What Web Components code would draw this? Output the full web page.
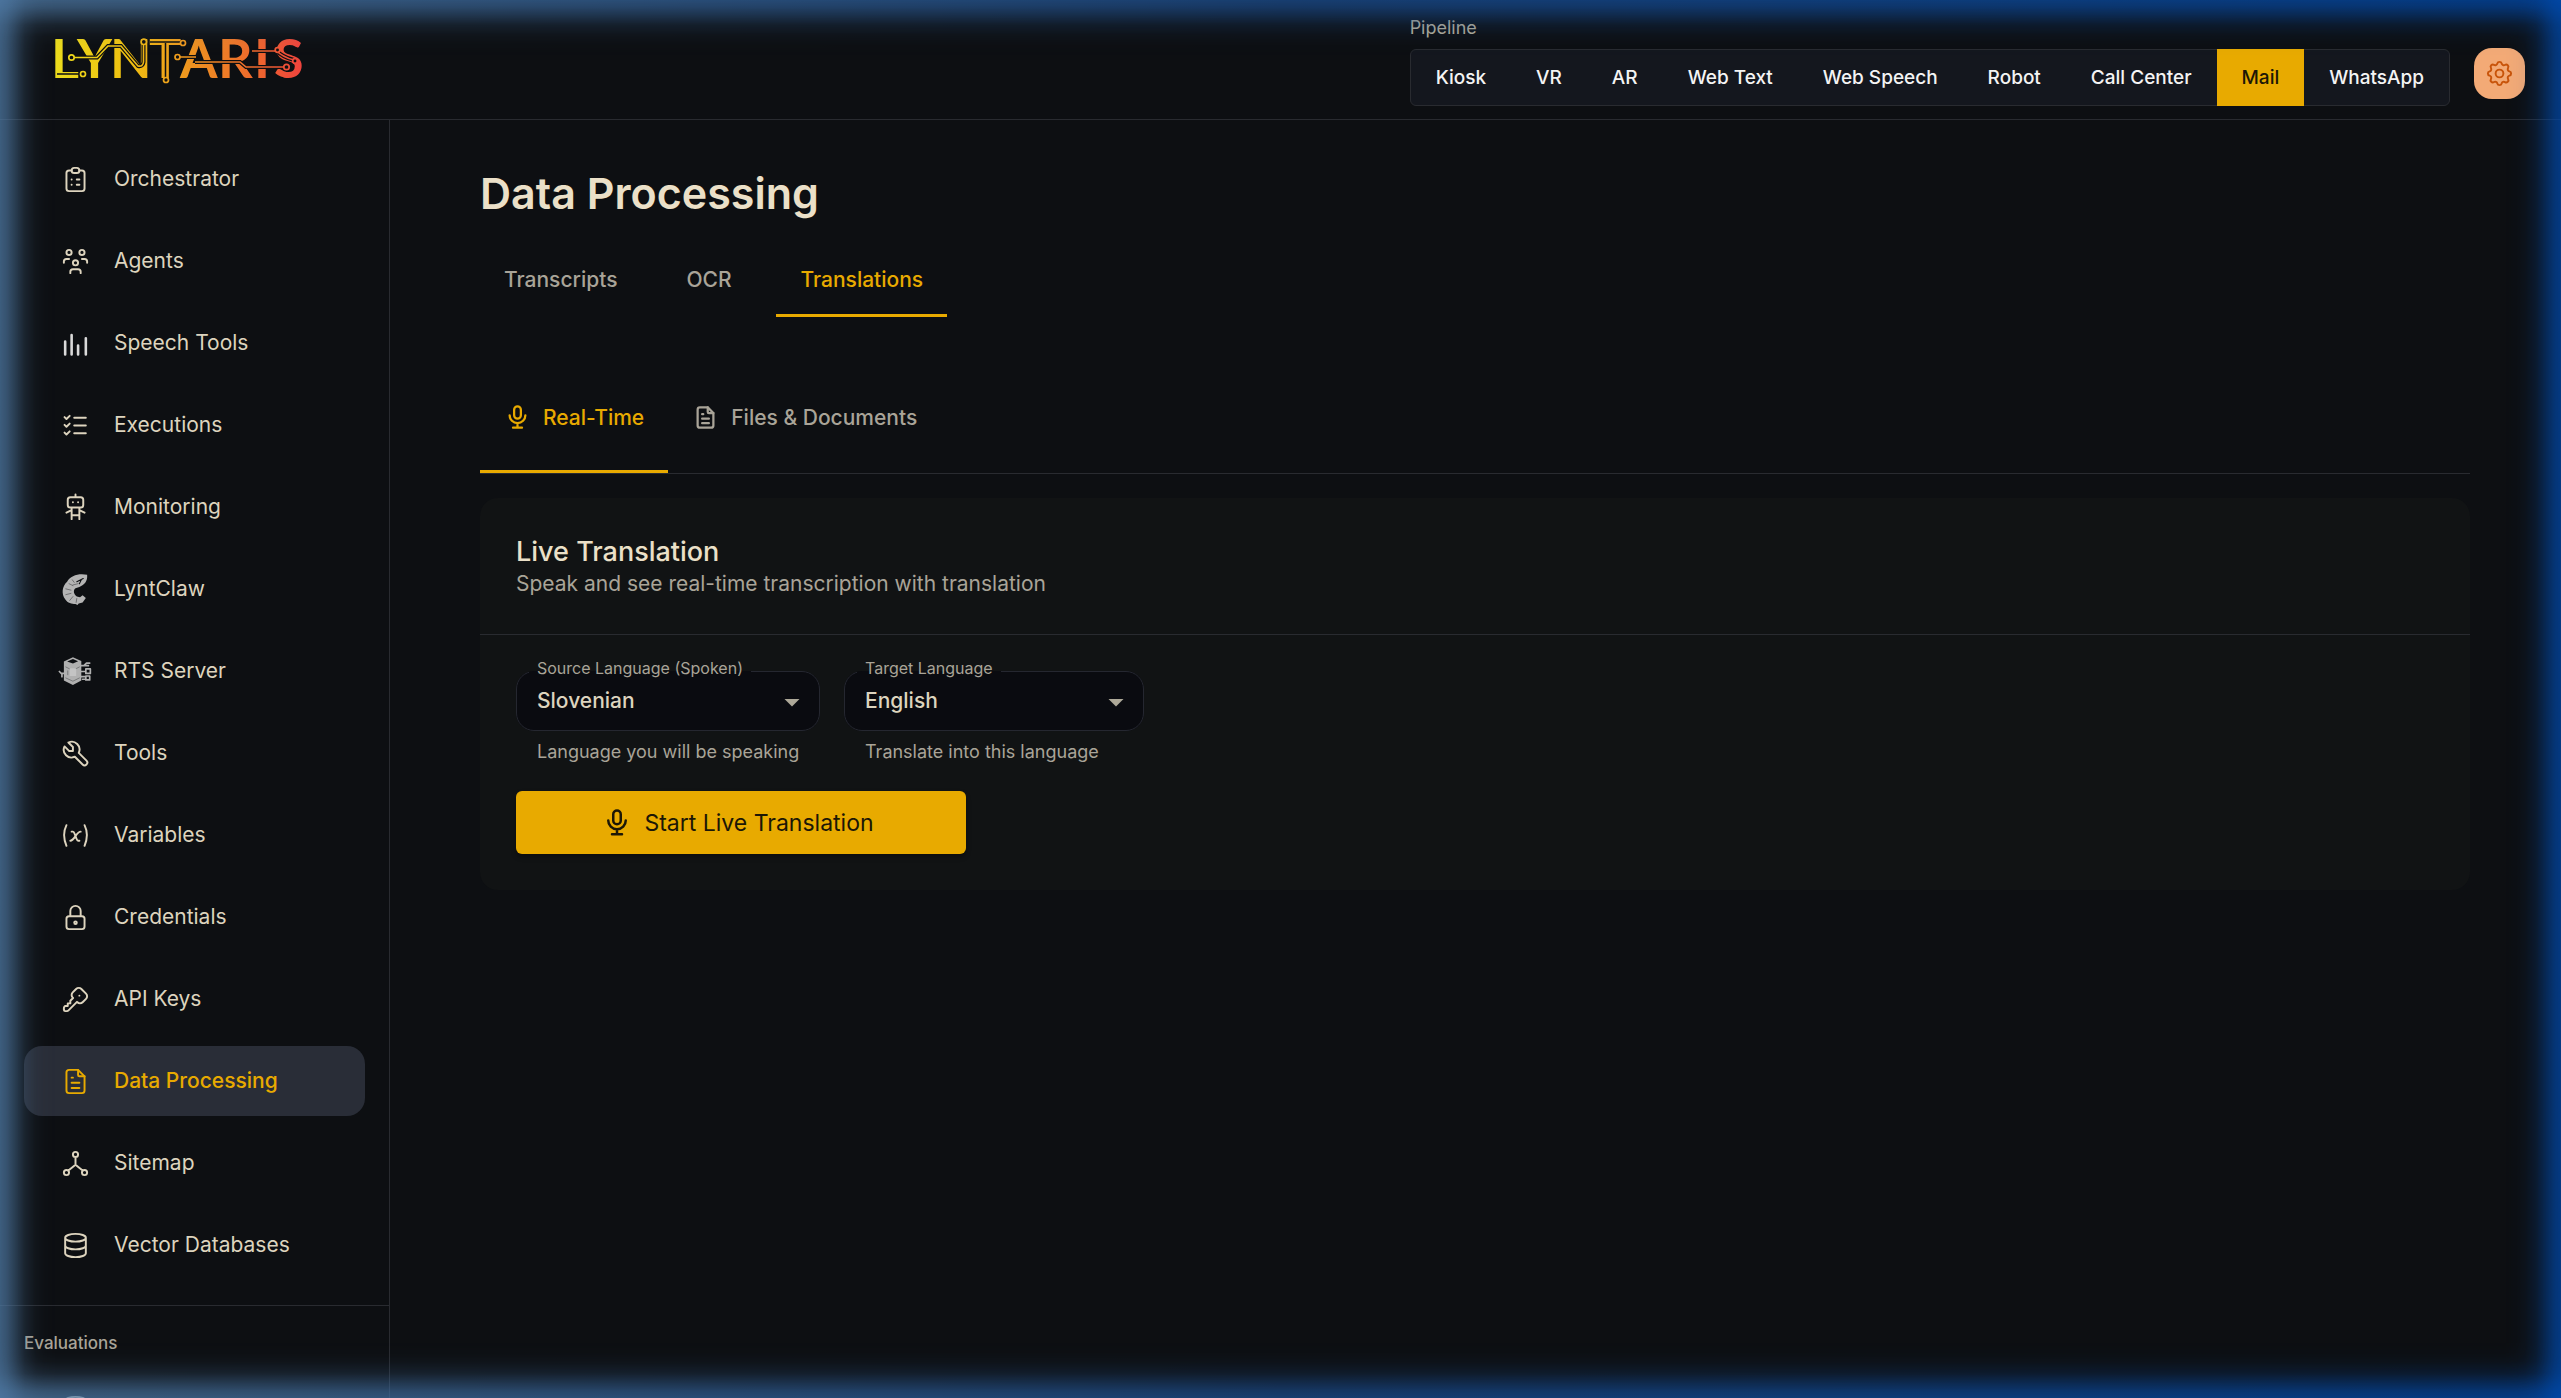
<!DOCTYPE html>
<html lang="en">
<head>
<meta charset="utf-8">
<title>Data Processing - Lyntaris</title>
<style>
  :root {
    --color-bg: #0d0f12;
    --color-surface: #111314;
    --color-field: #0a0b10;
    --color-border: #292b30;
    --color-active: #292d37;
    --color-primary: #e8aa00;
    --color-heading: #ebe0c8;
    --color-text: #ddd4be;
    --color-muted: #a9a498;
    --font-family: Inter, "Liberation Sans", sans-serif;
  }

  html, body { height: 100%; }

  body {
    margin: 0;
    overflow: hidden;
    background: var(--color-bg);
    color: var(--color-text);
    font-family: var(--font-family);
    font-size: 21px;
    line-height: 30px;
  }
</style>
</head>
<body>
<app-shell>
  <app-header slot="header">
    <pipeline-switch label="Pipeline" value="Mail" options="Kiosk,VR,AR,Web Text,Web Speech,Robot,Call Center,Mail,WhatsApp"></pipeline-switch>
  </app-header>

  <side-nav slot="sidebar">
    <nav-item icon="clipboard">Orchestrator</nav-item>
    <nav-item icon="users">Agents</nav-item>
    <nav-item icon="bars">Speech Tools</nav-item>
    <nav-item icon="checks">Executions</nav-item>
    <nav-item icon="robot">Monitoring</nav-item>
    <nav-item icon="claw">LyntClaw</nav-item>
    <nav-item icon="server">RTS Server</nav-item>
    <nav-item icon="tool">Tools</nav-item>
    <nav-item icon="variable">Variables</nav-item>
    <nav-item icon="lock">Credentials</nav-item>
    <nav-item icon="key">API Keys</nav-item>
    <nav-item icon="file" active>Data Processing</nav-item>
    <nav-item icon="sitemap">Sitemap</nav-item>
    <nav-item icon="database">Vector Databases</nav-item>
    <span slot="group">Evaluations</span>
    <nav-item slot="more" icon="database"></nav-item>
  </side-nav>

  <data-page></data-page>
</app-shell>
<edge-glow></edge-glow>

<script>
  const ICONS = {
    clipboard: '<path d="M9 5h-2a2 2 0 0 0 -2 2v12a2 2 0 0 0 2 2h10a2 2 0 0 0 2 -2v-12a2 2 0 0 0 -2 -2h-2"/><path d="M9 5a2 2 0 0 1 2 -2h2a2 2 0 0 1 2 2a2 2 0 0 1 -2 2h-2a2 2 0 0 1 -2 -2M9 12h.01M13 12h2M9 16h.01M13 16h2"/>',
    users: '<path d="M10 13a2 2 0 1 0 4 0a2 2 0 0 0 -4 0M8 21v-1a2 2 0 0 1 2 -2h4a2 2 0 0 1 2 2v1M15 5a2 2 0 1 0 4 0a2 2 0 0 0 -4 0M17 10h2a2 2 0 0 1 2 2v1M5 5a2 2 0 1 0 4 0a2 2 0 0 0 -4 0M3 13v-1a2 2 0 0 1 2 -2h2"/>',
    bars: '<g stroke="#d9d9d9" stroke-width="2"><path d="M4 10.500v10M9 5.500v15M14 13.500v7M20 8v12.500"/></g>',
    checks: '<path d="M3.500 5.500l1.500 1.500l2.500 -2.500M3.500 11.500l1.500 1.500l2.500 -2.500M3.500 17.500l1.500 1.500l2.500 -2.500M11 6h9M11 12h9M11 18h9"/>',
    robot: '<path d="M6 6a2 2 0 0 1 2 -2h8a2 2 0 0 1 2 2v4a2 2 0 0 1 -2 2h-8a2 2 0 0 1 -2 -2zM12 2v2M9 12v9M15 12v9M5 16l4 -2M15 14l4 2M9 18h6M10 8v.01M14 8v.01"/>',
    claw: '<path fill="#b4b4b4" stroke="none" d="M21 .6C15 -.8 8 1 5.500 6C1.500 9.500 1 15.500 4 19.500C6 22.500 9 23.200 12 23.200L13.500 24L14.500 22.800L17.500 22L20 18.500L17.500 16.500L15.500 18L13 17.500C10.500 15.500 10 12.500 12 11L15 10C19 8.500 21.500 5.500 21 .6z"/><path stroke="#0d0f12" stroke-width=".8" d="M13 6l5 -2.500M16.500 4.500l-1.500 3"/><path stroke="#4a4b4d" stroke-width=".5" d="M4.500 11.500l4 1M4.500 16l4 -1M7.500 20.500l2.500 -3M12.500 22l.5 -3M7 7.500l3 1.500M9.500 4.500l1.500 2M10 8.500l4 -1"/>',
    server: '<path fill="#b0b0b0" stroke="none" d="M3 4.200L10 1L16.500 3.800V19L10 22.500L3 19z"/><path fill="#0d0f12" stroke="none" d="M5.500 4.200l4.500 -1.800l4 1.700l-4 1.700z"/><path stroke="#5a5b5d" stroke-width=".5" d="M4.500 8.500l4 2M15 8.500l-4 2M4.500 17l5.500 2.500l5 -2.500M6 11.500v3"/><path fill="#c4c4c4" stroke="none" d="M7.500 9.500h5v6h-5z"/><path stroke="#b0b0b0" stroke-width="1.300" d="M3 13.500h-2l-1.500 -1.500M1.500 13.500v2.500M16.500 7.500h2l2 -2h2.500M19 7.500h3M16.500 12h3M20 10h3.500v3.500h-3.500zM16.500 16h3M20 15.500h3v3h-3zM17.500 18h2.500"/>',
    tool: '<path d="M7 10h3v-3l-3.500 -3.500a6 6 0 0 1 8 8l6 6a2 2 0 0 1 -3 3l-6 -6a6 6 0 0 1 -8 -8l3.500 3.500"/>',
    variable: '<path d="M5 4c-2.500 5 -2.500 10 0 16m14 -16c2.500 5 2.500 10 0 16m-10 -11h1c1 0 1 1 2.016 3.527c.984 2.473 .984 3.473 1.984 3.473h1M8 16c1.500 0 3 -2 4 -3.500s2.500 -3.500 4 -3.500"/>',
    lock: '<path d="M5 13a2 2 0 0 1 2 -2h10a2 2 0 0 1 2 2v6a2 2 0 0 1 -2 2h-10a2 2 0 0 1 -2 -2zM11 16a1 1 0 1 0 2 0a1 1 0 0 0 -2 0M8 11v-4a4 4 0 1 1 8 0v4"/>',
    key: '<path d="M16.555 3.843l3.602 3.602a2.877 2.877 0 0 1 0 4.069l-2.643 2.643a2.877 2.877 0 0 1 -4.069 0l-.301 -.301l-6.558 6.558a2 2 0 0 1 -1.239 .578l-.175 .008h-1.172a1 1 0 0 1 -.993 -.883l-.007 -.117v-1.172a2 2 0 0 1 .467 -1.284l.119 -.13l.414 -.414h2v-2h2v-2l2.144 -2.144l-.301 -.301a2.877 2.877 0 0 1 0 -4.069l2.643 -2.643a2.877 2.877 0 0 1 4.069 0zM15 9h.01"/>',
    file: '<path d="M14 3v4a1 1 0 0 0 1 1h4"/><path d="M17 21h-10a2 2 0 0 1 -2 -2v-14a2 2 0 0 1 2 -2h7l5 5v11a2 2 0 0 1 -2 2zM9 9h1M9 13h6M9 17h6"/>',
    sitemap: '<path d="M10 5a2 2 0 1 0 4 0a2 2 0 1 0 -4 0M3 19a2 2 0 1 0 4 0a2 2 0 1 0 -4 0M17 19a2 2 0 1 0 4 0a2 2 0 1 0 -4 0M6.500 17.500l5.500 -4.500l5.500 4.500M12 7v6"/>',
    database: '<path d="M4 6a8 3 0 1 0 16 0a8 3 0 1 0 -16 0M4 6v6a8 3 0 0 0 16 0v-6M4 12v6a8 3 0 0 0 16 0v-6"/>',
    settings: '<path d="M10.325 4.317c.426 -1.756 2.924 -1.756 3.350 0a1.724 1.724 0 0 0 2.573 1.066c1.543 -.94 3.310 .826 2.370 2.370a1.724 1.724 0 0 0 1.065 2.572c1.756 .426 1.756 2.924 0 3.350a1.724 1.724 0 0 0 -1.066 2.573c.94 1.543 -.826 3.310 -2.370 2.370a1.724 1.724 0 0 0 -2.572 1.065c-.426 1.756 -2.924 1.756 -3.350 0a1.724 1.724 0 0 0 -2.573 -1.066c-1.543 .94 -3.310 -.826 -2.370 -2.370a1.724 1.724 0 0 0 -1.065 -2.572c-1.756 -.426 -1.756 -2.924 0 -3.350a1.724 1.724 0 0 0 1.066 -2.573c-.94 -1.543 .826 -3.310 2.370 -2.370c1 .608 2.296 .07 2.572 -1.065z"/><path d="M9 12a3 3 0 1 0 6 0a3 3 0 0 0 -6 0"/>',
    mic: '<path d="M9 5a3 3 0 0 1 6 0v5a3 3 0 0 1 -6 0zM5 10a7 7 0 0 0 14 0M8 21h8M12 17v4"/>'
  };

  class AppIcon extends HTMLElement {
    connectedCallback() {
      if (this.shadowRoot) return;
      this.attachShadow({ mode: 'open' }).innerHTML = `
        <style>
          :host { display: block; flex: none; width: var(--icon-size, 31px); height: var(--icon-size, 31px); }
          svg {
            display: block;
            width: 100%;
            height: 100%;
            fill: none;
            stroke: currentColor;
            stroke-width: var(--icon-stroke, 1.5);
            stroke-linecap: round;
            stroke-linejoin: round;
            overflow: visible;
          }
        </style>
        <svg viewBox="0 0 24 24" aria-hidden="true">${ICONS[this.getAttribute('name')] || ''}</svg>
      `;
    }
  }
  customElements.define('app-icon', AppIcon);

  class AppShell extends HTMLElement {
    constructor() {
      super();
      this.attachShadow({ mode: 'open' }).innerHTML = `
        <style>
          :host { display: grid; grid-template-rows: auto 1fr; height: 100vh; }
          .body { display: grid; grid-template-columns: 390px 1fr; min-height: 0; }
          main { min-width: 0; overflow: hidden; }
        </style>
        <slot name="header"></slot>
        <div class="body">
          <slot name="sidebar"></slot>
          <main><slot></slot></main>
        </div>
      `;
    }
  }
  customElements.define('app-shell', AppShell);

  class BrandLogo extends HTMLElement {
    constructor() {
      super();
      this.attachShadow({ mode: 'open' }).innerHTML = `
        <style>
          :host { display: block; }
          svg { display: block; width: 270px; height: 76px; }
          text { font: 700 54px Lato, sans-serif; fill: url(#g); }
          .gap { fill: none; stroke: var(--color-bg); stroke-width: 4; }
          .slot { fill: none; stroke: var(--color-bg); stroke-width: 1.5; }
          .wire { fill: none; stroke: url(#g); stroke-width: 1.6; }
          circle { fill: var(--color-bg); stroke: url(#g); stroke-width: 1.7; }
        </style>
        <svg viewBox="0 -8 270 76" role="img" aria-label="Lyntaris">
          <defs>
            <linearGradient id="g" gradientUnits="userSpaceOnUse" x1="5" y1="0" x2="252" y2="0">
              <stop offset="0" stop-color="#ecdc1c"/>
              <stop offset=".3" stop-color="#efbf10"/>
              <stop offset=".55" stop-color="#ee9320"/>
              <stop offset=".8" stop-color="#ee6a2c"/>
              <stop offset="1" stop-color="#ee433d"/>
            </linearGradient>
          </defs>
          <text x="1 27 60 99 130 168 204 224" y="47">LYNTARIS</text>
          <path class="slot" d="M7 43H32M100 11H133M115.500 12V48"/>
          <path class="gap" d="M22 26.500H47L58 15H71L88 35Q93 36 93.500 31V11M128 26H146M145 31H190L196 36H236M202 20H227M226 19Q232 26 244 29"/>
          <path class="wire" d="M22 26.500H47L58 15H71L88 35Q93 36 93.500 31V11M128 26H146M145 31H190L196 36H236M202 20H227M226 19Q232 26 244 29"/>
          <circle cx="33" cy="43" r="2.500"/>
          <circle cx="21.500" cy="26.500" r="2.700"/>
          <circle cx="93.800" cy="10.800" r="2.700"/>
          <circle cx="133" cy="12" r="2.500"/>
          <circle cx="116" cy="49" r="2.500"/>
          <circle cx="127.500" cy="26" r="2.500"/>
          <circle cx="227.500" cy="19" r="2.300"/>
          <circle cx="245" cy="30" r="2.300"/>
          <circle cx="236.500" cy="36" r="2.700"/>
        </svg>
      `;
    }
  }
  customElements.define('brand-logo', BrandLogo);

  class AppHeader extends HTMLElement {
    constructor() {
      super();
      this.attachShadow({ mode: 'open' }).innerHTML = `
        <style>
          :host { display: block; border-bottom: 1px solid var(--color-border); }
          header { display: flex; align-items: center; gap: 24px; padding: 16px 36px 13px 50px; }
          brand-logo { margin-right: auto; }
          button {
            display: grid;
            place-items: center;
            width: 51px;
            height: 51px;
            margin: 25px 0 0;
            padding: 0;
            border: 0;
            border-radius: 18px;
            background: #f3aa76;
            color: #c8540a;
            cursor: pointer;
          }
        </style>
        <header>
          <brand-logo></brand-logo>
          <slot></slot>
          <button type="button" aria-label="Settings"><app-icon name="settings"></app-icon></button>
        </header>
      `;
    }
  }
  customElements.define('app-header', AppHeader);

  class PipelineSwitch extends HTMLElement {
    connectedCallback() {
      if (this.shadowRoot) return;
      const value = this.getAttribute('value');
      const buttons = this.getAttribute('options').split(',')
        .map(o => `<button type="button" aria-pressed="${o === value}">${o}</button>`).join('');
      this.attachShadow({ mode: 'open' }).innerHTML = `
        <style>
          :host { display: block; }
          .label { display: block; margin-bottom: 9px; font-size: 18px; line-height: 24px; color: #b4ac98; }
          .group {
            display: flex;
            border: 1px solid var(--color-border);
            border-radius: 6px;
            background: #14171e;
          }
          button {
            height: 55px;
            padding: 0 25px;
            border: 0;
            background: none;
            color: #f4f4f4;
            font: 500 19px var(--font-family);
            cursor: pointer;
          }
          button[aria-pressed="true"] {
            margin: -1px 0;
            height: 57px;
            background: var(--color-primary);
            color: #1c1706;
          }
        </style>
        <span class="label" id="label">${this.getAttribute('label')}</span>
        <div class="group" role="group" aria-labelledby="label">${buttons}</div>
      `;
      this.shadowRoot.querySelector('.group').addEventListener('click', e => {
        if (!e.target.matches('button')) return;
        this.shadowRoot.querySelectorAll('button').forEach(b => b.setAttribute('aria-pressed', b === e.target));
      });
    }
  }
  customElements.define('pipeline-switch', PipelineSwitch);

  class SideNav extends HTMLElement {
    constructor() {
      super();
      this.attachShadow({ mode: 'open' }).innerHTML = `
        <style>
          :host { display: block; min-height: 0; overflow: hidden; border-right: 1px solid var(--color-border); }
          nav, .more { display: flex; flex-direction: column; gap: 12px; padding: 24px 24px 25px; }
          .group {
            padding: 24px 24px 0;
            border-top: 1px solid var(--color-border);
            font-size: 17px;
            font-weight: 500;
            line-height: 27px;
            color: var(--color-muted);
          }
          .more { padding-top: 16px; }
        </style>
        <nav><slot></slot></nav>
        <div class="group"><slot name="group"></slot></div>
        <div class="more"><slot name="more"></slot></div>
      `;
    }
  }
  customElements.define('side-nav', SideNav);

  class NavItem extends HTMLElement {
    connectedCallback() {
      if (this.shadowRoot) return;
      this.attachShadow({ mode: 'open' }).innerHTML = `
        <style>
          :host { display: block; }
          a {
            display: flex;
            align-items: center;
            gap: 23px;
            height: 70px;
            padding: 0 36px;
            border-radius: 18px;
            color: var(--color-text);
            text-decoration: none;
            white-space: nowrap;
          }
          :host([active]) a { background: var(--color-active); color: var(--color-primary); font-weight: 500; }
        </style>
        <a href="#"><app-icon name="${this.getAttribute('icon')}"></app-icon><slot></slot></a>
      `;
      if (this.hasAttribute('active')) {
        this.shadowRoot.querySelector('a').setAttribute('aria-current', 'page');
      }
    }
  }
  customElements.define('nav-item', NavItem);

  class TabButton extends HTMLElement {
    connectedCallback() {
      if (this.shadowRoot) return;
      const icon = this.getAttribute('icon');
      this.attachShadow({ mode: 'open' }).innerHTML = `
        <style>
          :host { display: block; --icon-size: 27px; --icon-stroke: 2; }
          button {
            display: flex;
            align-items: center;
            justify-content: center;
            gap: 12px;
            box-sizing: border-box;
            min-width: 135px;
            height: var(--tab-height, 72px);
            padding: 0 24px;
            border: 0;
            border-bottom: 3px solid transparent;
            background: none;
            color: var(--color-muted);
            font: 500 21px var(--font-family);
            cursor: pointer;
          }
          :host([selected]) button { border-bottom-color: var(--color-primary); color: var(--color-primary); }
        </style>
        <button type="button" role="tab" aria-selected="${this.hasAttribute('selected')}">
          ${icon ? `<app-icon name="${icon}"></app-icon>` : ''}<slot></slot>
        </button>
      `;
    }
  }
  customElements.define('tab-button', TabButton);

  class SelectField extends HTMLElement {
    connectedCallback() {
      if (this.shadowRoot) return;
      const options = this.getAttribute('options').split(',').map(o => `<option>${o}</option>`).join('');
      this.attachShadow({ mode: 'open' }).innerHTML = `
        <style>
          :host { display: block; }
          fieldset {
            display: grid;
            align-items: center;
            margin: 0;
            padding: 0;
            min-width: 0;
            border: 1px solid #252730;
            border-radius: 18px;
            background: var(--color-field);
          }
          legend {
            margin-left: 12px;
            padding: 0 8px 6px;
            font-size: 16px;
            line-height: 18px;
            color: var(--color-muted);
          }
          select, svg { grid-area: 1 / 1; }
          select {
            appearance: none;
            width: 100%;
            height: 47px;
            margin: 0;
            padding: 0 56px 12px 20px;
            border: 0;
            outline: 0;
            background: none;
            color: var(--color-text);
            font: 500 21px var(--font-family);
          }
          svg { justify-self: end; width: 36px; height: 36px; margin: 0 9px 10px 0; fill: #aea999; pointer-events: none; }
          p { margin: 6px 0 0 21px; font-size: 18px; line-height: 30px; color: var(--color-muted); }
        </style>
        <fieldset>
          <legend><label for="select">${this.getAttribute('label')}</label></legend>
          <select id="select" aria-describedby="help">${options}</select>
          <svg viewBox="0 0 24 24" aria-hidden="true"><path d="M7 10l5 5 5-5z"/></svg>
        </fieldset>
        <p id="help">${this.getAttribute('help')}</p>
      `;
    }
  }
  customElements.define('select-field', SelectField);

  class DataPage extends HTMLElement {
    constructor() {
      super();
      this.attachShadow({ mode: 'open' }).innerHTML = `
        <style>
          :host { display: block; padding: 46px 91px 0 90px; }
          h1 { margin: 0; font-size: 43px; font-weight: 600; line-height: 54px; color: var(--color-heading); }
          .tabs { display: flex; margin-top: 25px; }
          .subtabs { display: flex; margin-top: 48px; border-bottom: 1px solid var(--color-border); --tab-height: 108px; }
          .card { margin-top: 24px; border-radius: 18px; background: var(--color-surface); }
          .head { padding: 37px 36px 35px; border-bottom: 1px solid var(--color-border); }
          h2 { margin: 0; font-size: 27px; font-weight: 500; line-height: 34px; color: var(--color-heading); }
          .head p { margin: 0; line-height: 30px; color: var(--color-muted); }
          .content { padding: 24px 36px 36px; }
          .fields { display: flex; gap: 24px; }
          .source { width: 304px; }
          .target { width: 300px; }
          .start {
            display: flex;
            align-items: center;
            justify-content: center;
            gap: 12px;
            width: 450px;
            height: 63px;
            margin-top: 24px;
            padding: 0 6px 0 0;
            border: 0;
            border-radius: 6px;
            background: var(--color-primary);
            box-shadow: 0 3px 5px rgba(0, 0, 0, .35);
            color: #1c1706;
            font: 400 23px var(--font-family);
            cursor: pointer;
            --icon-size: 30px;
            --icon-stroke: 2;
          }
        </style>
        <h1>Data Processing</h1>
        <div class="tabs" role="tablist">
          <tab-button>Transcripts</tab-button>
          <tab-button>OCR</tab-button>
          <tab-button selected>Translations</tab-button>
        </div>
        <div class="subtabs" role="tablist">
          <tab-button icon="mic" selected>Real-Time</tab-button>
          <tab-button icon="file">Files &amp; Documents</tab-button>
        </div>
        <section class="card">
          <div class="head">
            <h2>Live Translation</h2>
            <p>Speak and see real-time transcription with translation</p>
          </div>
          <div class="content">
            <div class="fields">
              <select-field class="source" label="Source Language (Spoken)" options="Slovenian,English,German" help="Language you will be speaking"></select-field>
              <select-field class="target" label="Target Language" options="English,Slovenian,German" help="Translate into this language"></select-field>
            </div>
            <button class="start" type="button"><app-icon name="mic"></app-icon>Start Live Translation</button>
          </div>
        </section>
      `;
    }
  }
  customElements.define('data-page', DataPage);

  // Blue halo that runs along all four window edges
  class EdgeGlow extends HTMLElement {
    constructor() {
      super();
      const fade = dir => `linear-gradient(to ${dir}, rgba(0,0,0,.72), rgba(0,0,0,.62) 7px, rgba(0,0,0,.43) 15px, rgba(0,0,0,.19) 25px, rgba(0,0,0,.06) 36px, rgba(0,0,0,.02) 44px, transparent 56px)`;
      this.attachShadow({ mode: 'open' }).innerHTML = `
        <style>
          :host {
            position: fixed;
            inset: 0;
            pointer-events: none;
            background: linear-gradient(to right, #507ca8, #1c5094 50%, #004baf);
            mask: ${['right', 'left', 'bottom', 'top'].map(fade).join(', ')};
          }
        </style>
      `;
    }
  }
  customElements.define('edge-glow', EdgeGlow);
</script>
</body>
</html>
